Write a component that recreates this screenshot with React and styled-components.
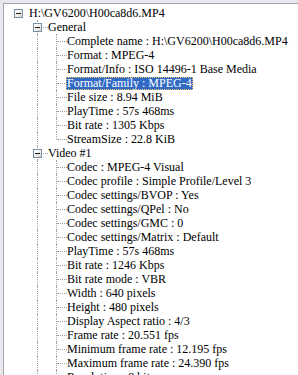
import React from 'react'
import styled, { createGlobalStyle } from 'styled-components'

const tree = {
  label: 'H:\\GV6200\\H00ca8d6.MP4',
  open: true,
  children: [
    {
      label: 'General',
      open: true,
      children: [
        { label: 'Complete name : H:\\GV6200\\H00ca8d6.MP4' },
        { label: 'Format : MPEG-4' },
        { label: 'Format/Info : ISO 14496-1 Base Media' },
        { label: 'Format/Family : MPEG-4', selected: true },
        { label: 'File size : 8.94 MiB' },
        { label: 'PlayTime : 57s 468ms' },
        { label: 'Bit rate : 1305 Kbps' },
        { label: 'StreamSize : 22.8 KiB' }
      ]
    },
    {
      label: 'Video #1',
      open: true,
      children: [
        { label: 'Codec : MPEG-4 Visual' },
        { label: 'Codec profile : Simple Profile/Level 3' },
        { label: 'Codec settings/BVOP : Yes' },
        { label: 'Codec settings/QPel : No' },
        { label: 'Codec settings/GMC : 0' },
        { label: 'Codec settings/Matrix : Default' },
        { label: 'PlayTime : 57s 468ms' },
        { label: 'Bit rate : 1246 Kbps' },
        { label: 'Bit rate mode : VBR' },
        { label: 'Width : 640 pixels' },
        { label: 'Height : 480 pixels' },
        { label: 'Display Aspect ratio : 4/3' },
        { label: 'Frame rate : 20.551 fps' },
        { label: 'Minimum frame rate : 12.195 fps' },
        { label: 'Maximum frame rate : 24.390 fps' },
        { label: 'Resolution : 8 bits' },
        { label: 'Chroma : 4:2:0' }
      ]
    },
    {
      label: 'Audio #1',
      children: [{ label: 'Codec : AAC LC' }]
    }
  ]
}

// flatten the open nodes into rows, remembering which ancestors continue below
const flatten = (node, depth = 0, ancestors = [], isLast = true, out = []) => {
  out.push({ node, depth, ancestors, isLast })
  if (node.open && node.children) {
    node.children.forEach((child, i) =>
      flatten(child, depth + 1, [...ancestors, !isLast], i === node.children.length - 1, out)
    )
  }
  return out
}

const GlobalStyle = createGlobalStyle`
  html, body {
    margin: 0;
    padding: 0;
    background: #e9e8ee;
    overflow: hidden;
  }
`

const Expander = ({ open }) => (
  <S.Box>
    <S.Minus />
    {!open && <S.Plus />}
  </S.Box>
)

const Row = ({ row }) => {
  const { node, depth, ancestors, isLast } = row
  const cells = []

  for (let c = 0; c < depth; c++) {
    cells.push(<S.Guide key={c} $line={c > 0 && ancestors[c]} />)
  }

  cells.push(
    <S.Connector key='own' $root={depth === 0} $last={isLast}>
      {node.children && <Expander open={node.open} />}
    </S.Connector>
  )

  return (
    <S.Row>
      {cells}
      <S.Label $selected={node.selected}>{node.label}</S.Label>
    </S.Row>
  )
}

const App = () => {
  const rows = flatten(tree)

  return (
    <>
      <GlobalStyle />
      <S.Panel>
        <S.Tree>
          {rows.map((row, i) => <Row key={i} row={row} />)}
        </S.Tree>
      </S.Panel>
    </>
  )
}

const dots = '1px dotted #a0a0a0'

const S = {
  Panel: styled.div`
    margin: 3px 0 0 3px;
    height: calc(100vh - 3px);
    border-top: 1px solid #a5a5a5;
    border-left: 1px solid #a5a5a5;
    background: #fff;
    overflow: hidden;
  `,
  Tree: styled.div`
    padding: 2px 0 0 5px;
    font-family: "Liberation Serif", "Times New Roman", serif;
    font-size: 12px;
    color: #000;
  `,
  Row: styled.div`
    display: flex;
    align-items: center;
    height: 14px;
    white-space: nowrap;
  `,
  Guide: styled.div`
    flex: none;
    width: 19px;
    height: 14px;
    position: relative;

    &::before {
      content: '';
      display: ${p => (p.$line ? 'block' : 'none')};
      position: absolute;
      left: 9px;
      top: 0;
      bottom: 0;
      border-left: ${dots};
    }
  `,
  Connector: styled.div`
    flex: none;
    width: 19px;
    height: 14px;
    position: relative;
    display: flex;
    align-items: center;
    padding-left: 5px;
    box-sizing: border-box;

    &::before {
      content: '';
      display: ${p => (p.$root ? 'none' : 'block')};
      position: absolute;
      left: 9px;
      top: 0;
      bottom: ${p => (p.$last ? '7px' : '0')};
      border-left: ${dots};
    }

    &::after {
      content: '';
      display: ${p => (p.$root ? 'none' : 'block')};
      position: absolute;
      left: 10px;
      right: -1px;
      top: 7px;
      border-top: ${dots};
    }
  `,
  Box: styled.div`
    position: relative;
    z-index: 1;
    width: 9px;
    height: 9px;
    box-sizing: border-box;
    border: 1px solid #7a8fa8;
    background: linear-gradient(135deg, #ffffff 20%, #d8d4c4 100%);
    display: flex;
    align-items: center;
    justify-content: center;
  `,
  Minus: styled.span`
    width: 5px;
    height: 1px;
    background: #1c1c1c;
  `,
  Plus: styled.span`
    position: absolute;
    width: 1px;
    height: 5px;
    background: #1c1c1c;
  `,
  Label: styled.span`
    position: relative;
    z-index: 1;
    padding: 0 1px;
    height: 13px;
    line-height: 13px;
    background: ${p => (p.$selected ? '#316ac5' : 'transparent')};
    color: ${p => (p.$selected ? '#fff' : '#000')};
    outline: ${p => (p.$selected ? '1px dotted #f0c468' : 'none')};
    outline-offset: -1px;
  `
}

export default App
